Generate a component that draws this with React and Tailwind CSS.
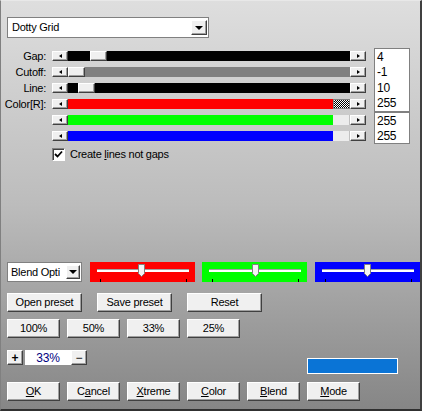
import React from 'react'

const font = "font-['Liberation_Sans',Arial,sans-serif] text-[11px] tracking-[-0.25px] leading-none text-black"

const raised =
  'border border-t-white border-l-white border-r-[#404040] border-b-[#404040] bg-[#f0f0f0] shadow-[inset_-1px_-1px_0_#a0a0a0]'

const Arrow = ({ dir }) => (
  <div className={`w-[16px] h-full flex items-center justify-center ${raised}`}>
    {dir === 'left' ? (
      <div className="w-0 h-0 border-y-[2px] border-y-transparent border-r-[3px] border-r-black" />
    ) : (
      <div className="w-0 h-0 border-y-[2px] border-y-transparent border-l-[3px] border-l-black" />
    )}
  </div>
)

// one scroll bar: fill to the left of the thumb, track colour to the right
const Bar = ({ fill, track, fillW, thumb = 'plain' }) => (
  <div className="flex h-[10px] w-[314px]">
    <Arrow dir="left" />
    <div className="flex flex-1 h-full">
      <div className={`h-full ${fill}`} style={{ width: fillW }} />
      {thumb === 'checker' ? (
        <div className="w-[17px] h-full border border-[#808080] bg-[repeating-conic-gradient(#000_0_25%,#fff_0_50%)] bg-[length:2px_2px]" />
      ) : thumb === 'flat' ? (
        <div className="w-[17px] h-full bg-[#ececec] border-r border-[#c0c0c0]" />
      ) : (
        <div className={`w-[17px] h-full ${raised}`} />
      )}
      <div className={`flex-1 h-full ${track}`} />
    </div>
    <Arrow dir="right" />
  </div>
)

const rows = [
  { label: 'Gap:', fill: 'bg-black', track: 'bg-black', fillW: 22 },
  { label: 'Cutoff:', fill: 'bg-[#808080]', track: 'bg-[#808080]', fillW: 0 },
  { label: 'Line:', fill: 'bg-black', track: 'bg-black', fillW: 10 },
  { label: 'Color[R]:', fill: 'bg-[#ff0000]', track: 'bg-[#ff0000]', fillW: 265, thumb: 'checker' },
  { label: '', fill: 'bg-[#00ff00]', track: 'bg-[#00ff00]', fillW: 265, thumb: 'flat' },
  { label: '', fill: 'bg-[#0000ff]', track: 'bg-[#0000ff]', fillW: 265, thumb: 'flat' },
]

const Btn = ({ w, children }) => (
  <div className={`h-[19px] flex items-center justify-center ${raised}`} style={{ width: w }}>
    {children}
  </div>
)

const ColorSlider = ({ bg, pos }) => (
  <div className={`relative w-[105px] h-[20px] ${bg}`}>
    <div className="absolute left-[7px] right-[6px] top-[7px] h-[3px] bg-white border-t border-[#a0a0a0]" />
    <svg className="absolute top-[2px]" style={{ left: pos }} width="7" height="13" viewBox="0 0 7 13">
      <path d="M0.5 0.5 H6.5 V9.5 L3.5 12.5 L0.5 9.5 Z" fill="#f4f4f4" stroke="#808080" />
    </svg>
    <div className="absolute left-[10px] bottom-0 w-px h-[3px] bg-black" />
    <div className="absolute left-[96px] bottom-0 w-px h-[3px] bg-black" />
  </div>
)

export default function App() {
  return (
    <div
      className={`w-[422px] h-[411px] overflow-hidden flex flex-col bg-gradient-to-b from-[#dedede] via-[#bcbcbc] to-[#868686] border-l border-t border-l-[#808080] border-t-[#e8e8e8] border-r-2 border-b-2 border-r-[#404040] border-b-[#303030] ${font}`}
    >
      {/* preset dropdown */}
      <div className="ml-[6px] mt-[16px] w-[202px] h-[21px] bg-white border border-[#808080] flex items-center justify-between pl-[4px] pr-[1px]">
        <span>Dotty Grid</span>
        <div className={`w-[16px] h-[15px] flex items-center justify-center ${raised}`}>
          <div className="w-0 h-0 border-x-[4px] border-x-transparent border-t-[4px] border-t-black" />
        </div>
      </div>

      {/* sliders with values */}
      <div className="mt-[10px] flex">
        <div className="flex flex-col">
          {rows.map((r, i) => (
            <div key={i} className="flex h-[16px] items-center">
              <div className="w-[45px] text-right text-[11px]">{r.label}</div>
              <div className="ml-[6px]">
                <Bar fill={r.fill} track={r.track} fillW={r.fillW} thumb={r.thumb} />
              </div>
            </div>
          ))}
        </div>
        <div className="ml-[8px] flex flex-col">
          <div className="w-[36px] h-[64px] bg-white border border-[#808080] flex flex-col">
            {['4', '-1', '10', '255'].map((v) => (
              <div key={v} className="h-[16px] flex items-center pl-[2px] text-[12px]">{v}</div>
            ))}
          </div>
          <div className="w-[36px] h-[32px] bg-white border border-[#808080] flex flex-col">
            {['255', '255'].map((v, i) => (
              <div key={i} className="h-[15px] flex items-center pl-[2px] text-[12px]">{v}</div>
            ))}
          </div>
        </div>
      </div>

      {/* checkbox */}
      <div className="mt-[4px] ml-[51px] flex items-center gap-[5px]">
        <div className="w-[13px] h-[13px] bg-white border border-t-[#808080] border-l-[#808080] border-r-white border-b-white shadow-[inset_1px_1px_0_#404040] flex items-center justify-center">
          <svg width="9" height="9" viewBox="0 0 9 9">
            <path d="M1 4 L3.5 6.5 L8 1.5" fill="none" stroke="#000" strokeWidth="1.8" />
          </svg>
        </div>
        <span>
          Create <u>l</u>ines not gaps
        </span>
      </div>

      {/* blend options and colour sliders */}
      <div className="mt-[101px] ml-[6px] flex items-center">
        <div className="w-[76px] h-[20px] bg-white border border-[#808080] flex items-center justify-between pl-[3px] pr-[1px] overflow-hidden">
          <span className="whitespace-nowrap overflow-hidden">Blend Opti</span>
          <div className={`shrink-0 w-[14px] h-[14px] flex items-center justify-center ${raised}`}>
            <div className="w-0 h-0 border-x-[4px] border-x-transparent border-t-[4px] border-t-black" />
          </div>
        </div>
        <div className="ml-[8px] flex gap-[7px]">
          <ColorSlider bg="bg-[#ff0000]" pos={48} />
          <ColorSlider bg="bg-[#00ff00]" pos={50} />
          <div className="ml-px">
            <ColorSlider bg="bg-[#0000ff]" pos={49} />
          </div>
        </div>
      </div>

      {/* preset buttons */}
      <div className="mt-[11px] ml-[6px] flex gap-[15px]">
        <Btn w={75}>Open preset</Btn>
        <Btn w={75}>Save preset</Btn>
        <Btn w={75}>Reset</Btn>
      </div>

      {/* zoom buttons */}
      <div className="mt-[7px] ml-[6px] flex gap-[7px]">
        <Btn w={53}>100%</Btn>
        <Btn w={53}>50%</Btn>
        <Btn w={53}>33%</Btn>
        <Btn w={53}>25%</Btn>
      </div>

      {/* stepper and colour swatch */}
      <div className="mt-[12px] ml-[6px] flex h-[24px]">
        <div className="flex self-start h-[15px]">
          <div className={`w-[16px] h-full flex items-center justify-center font-bold text-[12px] ${raised}`}>+</div>
          <div className="ml-[2px] w-[46px] h-full bg-white flex items-center justify-center text-[#000080] text-[12px]">33%</div>
          <div className={`w-[16px] h-full flex items-center justify-center text-[12px] ${raised}`}>−</div>
        </div>
        <div className="ml-[220px] self-end w-[91px] h-[16px] border border-white bg-[#0a74d6]" />
      </div>

      {/* dialog buttons */}
      <div className="mt-[8px] ml-[6px] flex gap-[7px]">
        <Btn w={53}><span><u>O</u>K</span></Btn>
        <Btn w={53}><span>C<u>a</u>ncel</span></Btn>
        <Btn w={53}><span><u>X</u>treme</span></Btn>
        <Btn w={53}><span><u>C</u>olor</span></Btn>
        <Btn w={53}><span><u>B</u>lend</span></Btn>
        <Btn w={53}><span><u>M</u>ode</span></Btn>
      </div>
    </div>
  )
}
